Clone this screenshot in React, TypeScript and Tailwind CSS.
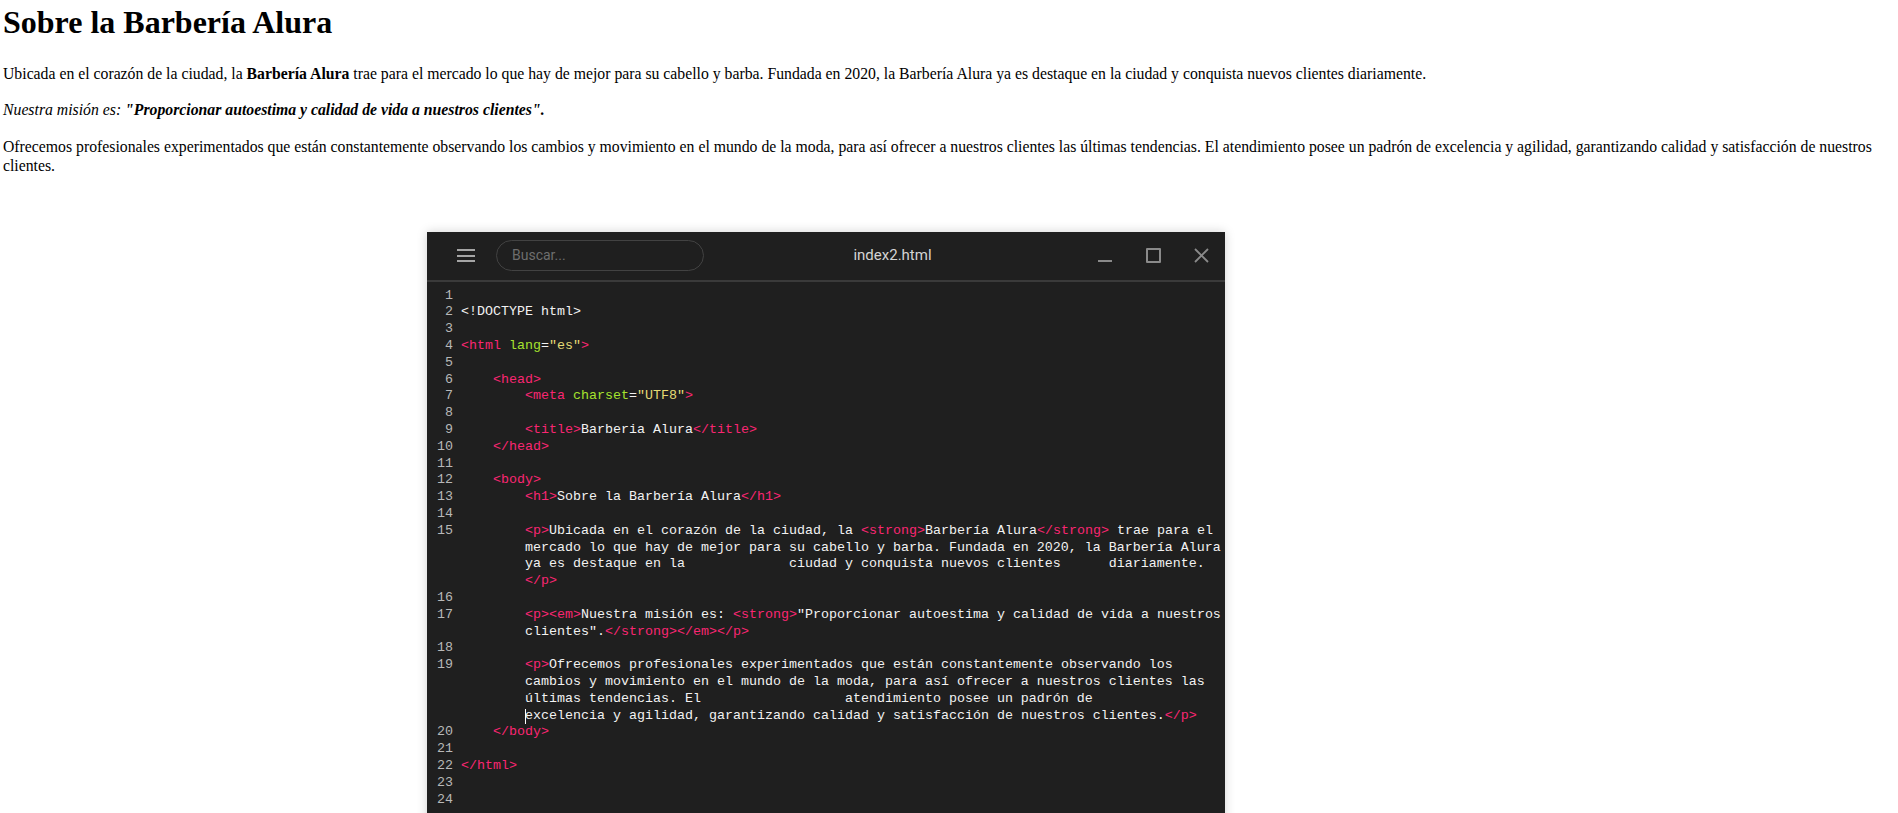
import type { ReactNode } from 'react';

type Seg = { k: 't' | 'a' | 's' | 'x'; v: string };
type Row = { n?: number; segs: Seg[]; cursor?: boolean };

const t = (v: string): Seg => ({ k: 't', v });
const a = (v: string): Seg => ({ k: 'a', v });
const s = (v: string): Seg => ({ k: 's', v });
const x = (v: string): Seg => ({ k: 'x', v });

const I4 = '    ';
const I8 = '        ';

// rows of the editor, wrapped rows have no line number
const rows: Row[] = [
  { n: 1, segs: [] },
  { n: 2, segs: [x('<!DOCTYPE html>')] },
  { n: 3, segs: [] },
  { n: 4, segs: [t('<html'), x(' '), a('lang'), x('='), s('"es"'), t('>')] },
  { n: 5, segs: [] },
  { n: 6, segs: [x(I4), t('<head>')] },
  { n: 7, segs: [x(I8), t('<meta'), x(' '), a('charset'), x('='), s('"UTF8"'), t('>')] },
  { n: 8, segs: [] },
  { n: 9, segs: [x(I8), t('<title>'), x('Barberia Alura'), t('</title>')] },
  { n: 10, segs: [x(I4), t('</head>')] },
  { n: 11, segs: [] },
  { n: 12, segs: [x(I4), t('<body>')] },
  { n: 13, segs: [x(I8), t('<h1>'), x('Sobre la Barbería Alura'), t('</h1>')] },
  { n: 14, segs: [] },
  {
    n: 15,
    segs: [x(I8), t('<p>'), x('Ubicada en el corazón de la ciudad, la '), t('<strong>'), x('Barbería Alura'), t('</strong>'), x(' trae para el')],
  },
  { segs: [x(I8 + 'mercado lo que hay de mejor para su cabello y barba. Fundada en 2020, la Barbería Alura')] },
  { segs: [x(I8 + 'ya es destaque en la             ciudad y conquista nuevos clientes      diariamente.')] },
  { segs: [x(I8), t('</p>')] },
  { n: 16, segs: [] },
  {
    n: 17,
    segs: [x(I8), t('<p><em>'), x('Nuestra misión es: '), t('<strong>'), x('"Proporcionar autoestima y calidad de vida a nuestros')],
  },
  { segs: [x(I8 + 'clientes".'), t('</strong></em></p>')] },
  { n: 18, segs: [] },
  { n: 19, segs: [x(I8), t('<p>'), x('Ofrecemos profesionales experimentados que están constantemente observando los')] },
  { segs: [x(I8 + 'cambios y movimiento en el mundo de la moda, para así ofrecer a nuestros clientes las')] },
  { segs: [x(I8 + 'últimas tendencias. El                  atendimiento posee un padrón de')] },
  { segs: [x(I8), x('excelencia y agilidad, garantizando calidad y satisfacción de nuestros clientes.'), t('</p>')], cursor: true },
  { n: 20, segs: [x(I4), t('</body>')] },
  { n: 21, segs: [] },
  { n: 22, segs: [t('</html>')] },
  { n: 23, segs: [] },
  { n: 24, segs: [] },
];

const color: Record<Seg['k'], string> = {
  t: 'text-[#f92672]',
  a: 'text-[#a6e22e]',
  s: 'text-[#e6db74]',
  x: 'text-[#f2f2f2]',
};

function CodeRow({ row }: { row: Row }) {
  const parts: ReactNode[] = row.segs.map((seg, i) => {
    const cursorHere = row.cursor && i === 1;
    return (
      <span key={i} className={`${color[seg.k]} ${cursorHere ? 'relative' : ''}`}>
        {cursorHere && <span className="absolute left-0 top-[1px] h-[15px] w-px bg-white" />}
        {seg.v}
      </span>
    );
  });
  return (
    <div className="flex h-[16.8px] leading-[16.8px]">
      <div className="w-[26px] shrink-0 text-right text-[#b8b8b8]">{row.n ?? ''}</div>
      <div className="ml-[8px] whitespace-pre">{parts}</div>
    </div>
  );
}

function TitleBar() {
  return (
    <div className="flex h-[48px] items-center border-b-2 border-[#3a3a3a] pl-[30px]" style={{ boxSizing: 'content-box' }}>
      {/* menu */}
      <div className="flex w-[18px] flex-col gap-[3.5px]">
        <span className="h-[2px] bg-[#a5a5a5]" />
        <span className="h-[2px] bg-[#a5a5a5]" />
        <span className="h-[2px] bg-[#a5a5a5]" />
      </div>
      <div className="ml-[21px] flex h-[31px] w-[208px] items-center rounded-full border border-[#424242] pl-[15px] text-[14px] text-[#6e6e6e] font-['Roboto',sans-serif]">
        Buscar...
      </div>
      <div className="flex-1 text-center text-[15px] text-[#d4d4d4] font-['Roboto',sans-serif]">index2.html</div>
      <div className="flex">
        <div className="flex h-[48px] w-[48px] items-center justify-center">
          <span className="mt-[11px] h-[2px] w-[14px] bg-[#8a8a8a]" />
        </div>
        <div className="flex h-[48px] w-[48px] items-center justify-center">
          <span className="h-[15px] w-[15px] rounded-[1px] border-2 border-[#8a8a8a]" />
        </div>
        <div className="flex h-[48px] w-[48px] items-center justify-center">
          <svg width="15" height="15" viewBox="0 0 15 15" fill="none" stroke="#8a8a8a" strokeWidth="1.8">
            <path d="M1 1 L14 14 M14 1 L1 14" />
          </svg>
        </div>
      </div>
    </div>
  );
}

export default function App() {
  return (
    <div className="h-screen overflow-hidden bg-white pl-[3px] text-black font-['Liberation_Serif',serif]">
      <h1 className="pt-[2px] text-[32px] font-bold leading-[40px]">Sobre la Barbería Alura</h1>
      <p className="mt-[22px] text-[15.75px] leading-[19.4px]">
        Ubicada en el corazón de la ciudad, la <strong>Barbería Alura</strong> trae para el mercado lo que hay de mejor para su
        cabello y barba. Fundada en 2020, la Barbería Alura ya es destaque en la ciudad y conquista nuevos clientes diariamente.
      </p>
      <p className="mt-[17px] text-[15.75px] leading-[19.4px]">
        <em>
          Nuestra misión es: <strong>"Proporcionar autoestima y calidad de vida a nuestros clientes".</strong>
        </em>
      </p>
      <p className="mt-[17px] text-[15.75px] leading-[19.4px]">
        Ofrecemos profesionales experimentados que están constantemente observando los cambios y movimiento en el mundo de la
        moda, para así ofrecer a nuestros clientes las últimas tendencias. El atendimiento posee un padrón de excelencia y
        agilidad, garantizando calidad y satisfacción de nuestros clientes.
      </p>

      <div className="ml-[424px] mt-[56px] h-[620px] w-[798px] overflow-hidden bg-[#1f1f1f] shadow-[0_0_10px_rgba(0,0,0,0.18)]">
        <TitleBar />
        <div className="pt-[6px] text-[13.33px] font-['Liberation_Mono',monospace]">
          {rows.map((r, i) => (
            <CodeRow key={i} row={r} />
          ))}
        </div>
      </div>
    </div>
  );
}
